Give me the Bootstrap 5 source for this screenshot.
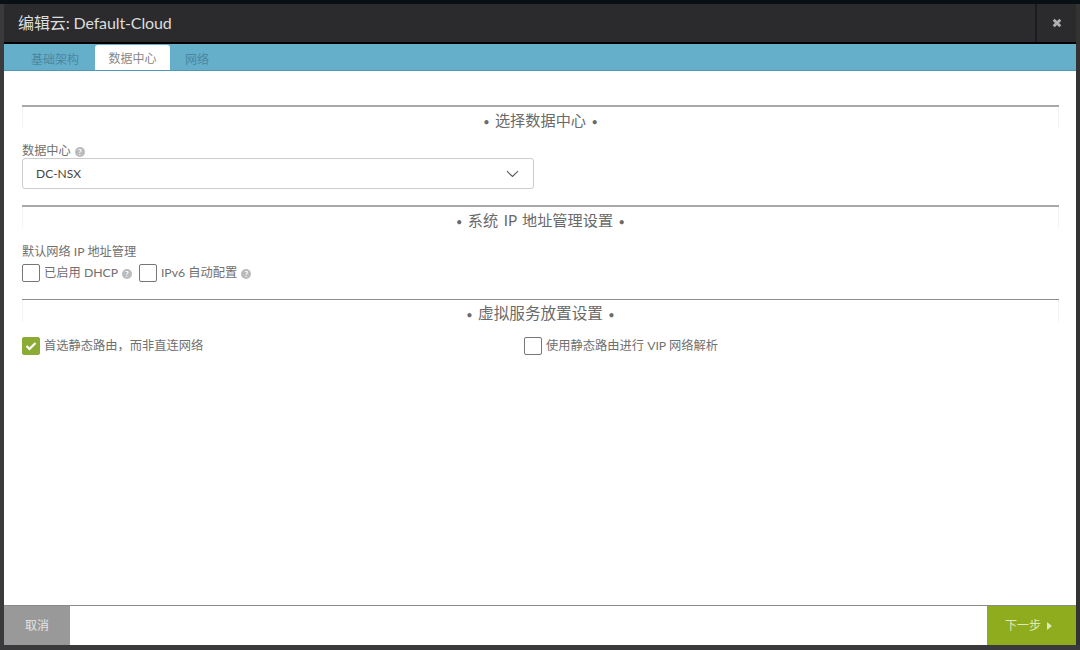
<!DOCTYPE html>
<html lang="zh">
<head>
<meta charset="utf-8">
<title>编辑云</title>
<link rel="stylesheet" href="https://cdn.jsdelivr.net/npm/bootstrap@5.3.0/dist/css/bootstrap.min.css">
<style>
html,body{height:650px;overflow:hidden}
body{background:#3a3a3c;font-family:Lato,"Noto Sans CJK SC",sans-serif;color:#707070;font-size:12px}
.top-strip{height:4px;background:#071015}
.page-row{height:641px}
.side-l{width:4px;background:#3a3a3c}
.side-r{width:4px;background:#333}
.dlg{width:1072px;background:#fff}
.dlg-head{height:38px;background:#2b2b2d;color:#ddd;border-bottom:2px solid #000;box-sizing:content-box}
.dlg-title{font-size:16px;padding-left:14px;line-height:38px;letter-spacing:-.12px}
.dlg-close{width:41px;border-left:2px solid #1c1c1e;color:#aaa}
.tabbar{height:27px;background:#66afcb;border-bottom:1px solid #4d9ab8;padding-left:14px}
.tabitem{font-size:12px;padding:5px 13px 0;color:#4a87a0;line-height:21px;height:26px;margin-right:3px}
.tabitem.on{background:#fff;color:#888;border-radius:3px 3px 0 0;margin-top:1px;height:25px;line-height:20px;padding:4px 13.5px 0;margin-right:2px}
.dlg-body{flex:1;padding:34px 17px 0 18px}
.sect{border-top:2px solid #a9a9a9;height:23px;text-align:center;font-size:15.2px;line-height:27px;color:#6a6a6a;word-spacing:1.5px;box-shadow:inset 1px 0 0 #f4f4f4,inset -1px 0 0 #f4f4f4}
.sect.thin{border-top-width:1px;border-top-color:#8c8c8c;font-size:15.6px}
.sect-dot{font-size:11px;word-spacing:0}
.fld-label{font-size:12.2px;line-height:14px}
.q{display:inline-block;width:10px;height:10px;border-radius:50%;background:#bbb;color:#fff;font-size:8px;line-height:10px;text-align:center;font-weight:700;vertical-align:0;margin-left:1px}
.picker{width:512px;height:31px;border:1px solid #ccc;border-radius:3px;padding:0 14px 0 13px;font-size:12px;color:#444}
.cbox{width:18px;height:18px;border:1px solid #777;border-radius:2px;flex:none}
.cbox.on{background:#8bab35;border-color:#8bab35}
.chk{font-size:12.25px;line-height:18px}
.half{width:502px}
.dlg-foot{height:40px;border-top:1px solid #8a8a8a;background:#fff;flex:none}
.btn-cancel,.btn-next{border:0;border-radius:0;font-size:12px;height:39px;padding:0}
.btn-cancel{width:66px;background:#999;color:#e4e4e4}
.btn-next{width:89px;background:#8fac1f;color:#dfe8b8;padding-right:6px;word-spacing:2px}
.btn-cancel:hover{background:#999;color:#e4e4e4}
.btn-next:hover{background:#8fac1f;color:#dfe8b8}
</style>
</head>
<body>
<div class="top-strip"></div>
<div class="d-flex page-row">
  <div class="side-l"></div>
  <div class="dlg d-flex flex-column">
    <div class="dlg-head d-flex justify-content-between">
      <div class="dlg-title">编辑云: Default-Cloud</div>
      <div class="dlg-close d-flex align-items-center justify-content-center">
        <svg width="10" height="10" viewBox="0 0 10 10" aria-hidden="true"><path d="M1.7 1.7L8.3 8.3M8.3 1.7L1.7 8.3" stroke="#b0b0b0" stroke-width="2.8" fill="none"/></svg>
      </div>
    </div>
    <div class="tabbar d-flex">
      <div class="tabitem">基础架构</div>
      <div class="tabitem on">数据中心</div>
      <div class="tabitem">网络</div>
    </div>
    <div class="dlg-body">
      <div class="sect"><span class="sect-dot">•</span> 选择数据中心 <span class="sect-dot">•</span></div>
      <div class="fld-label" style="margin-top:16px">数据中心 <span class="q">?</span></div>
      <div class="picker d-flex align-items-center justify-content-between">
        <span>DC-NSX</span>
        <svg width="13" height="8" viewBox="0 0 13 8" aria-hidden="true"><path d="M1 1.2L6.5 6.5L12 1.2" stroke="#555" stroke-width="1.1" fill="none"/></svg>
      </div>
      <div class="sect" style="margin-top:16px"><span class="sect-dot">•</span> 系统 IP 地址管理设置 <span class="sect-dot">•</span></div>
      <div class="fld-label" style="margin-top:17px">默认网络 IP 地址管理</div>
      <div class="d-flex align-items-center chk" style="margin-top:5px">
        <span class="cbox"></span><span style="margin-left:4px">已启用 DHCP <span class="q">?</span></span>
        <span class="cbox" style="margin-left:7px"></span><span style="margin-left:4px">IPv6 自动配置 <span class="q">?</span></span>
      </div>
      <div class="sect thin" style="margin-top:17px"><span class="sect-dot">•</span> 虚拟服务放置设置 <span class="sect-dot">•</span></div>
      <div class="d-flex chk" style="margin-top:15px">
        <div class="half d-flex align-items-center">
          <span class="cbox on d-flex align-items-center justify-content-center">
            <svg width="12" height="10" viewBox="0 0 12 10" aria-hidden="true"><path d="M1.5 5L4.5 8L10.5 2" stroke="#fff" stroke-width="2.2" fill="none"/></svg>
          </span>
          <span style="margin-left:4px">首选静态路由，而非直连网络</span>
        </div>
        <div class="d-flex align-items-center">
          <span class="cbox"></span>
          <span style="margin-left:4px">使用静态路由进行 VIP 网络解析</span>
        </div>
      </div>
    </div>
    <div class="dlg-foot d-flex justify-content-between">
      <button type="button" class="btn btn-cancel">取消</button>
      <button type="button" class="btn btn-next">下一步 <svg width="6" height="8" viewBox="0 0 6 8" aria-hidden="true"><path d="M1 0L6 4L1 8Z" fill="#dfe8b8"/></svg></button>
    </div>
  </div>
  <div class="side-r"></div>
</div>
</body>
</html>
